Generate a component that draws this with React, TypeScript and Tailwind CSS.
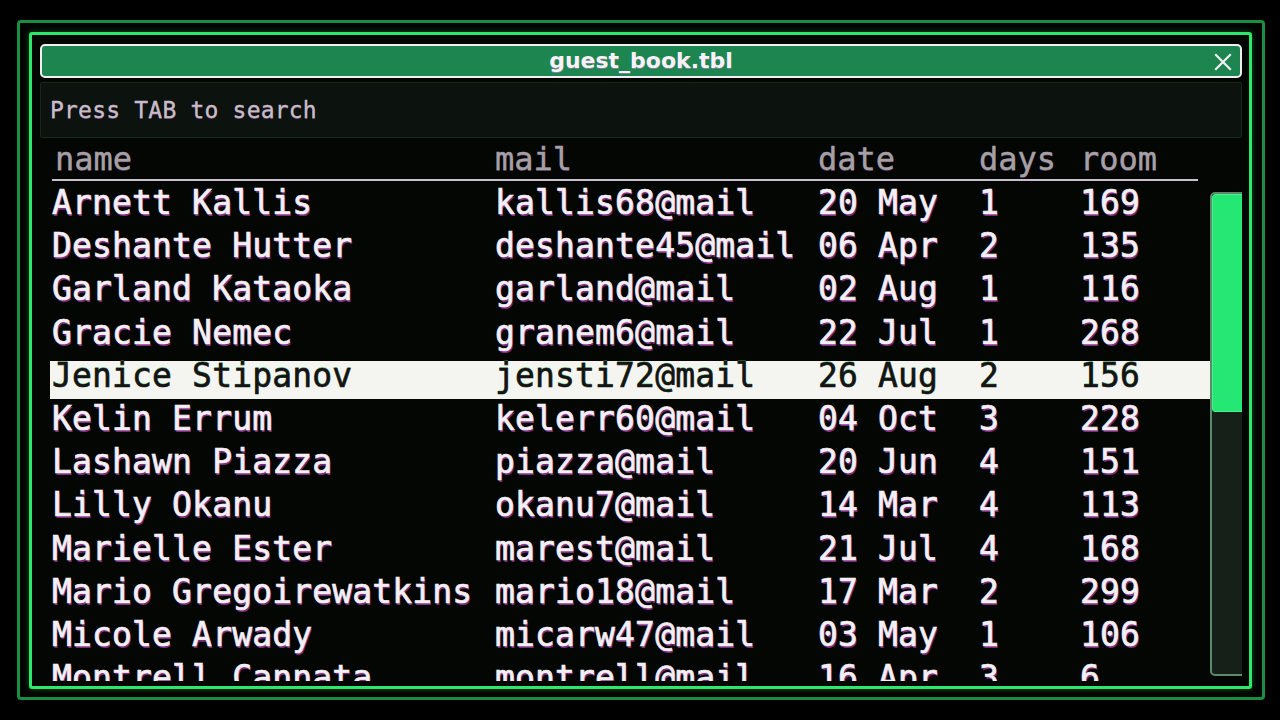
import React from "react";

type Guest = { name: string; mail: string; date: string; days: string; room: string };

const guests: Guest[] = [
  { name: "Arnett Kallis", mail: "kallis68@mail", date: "20 May", days: "1", room: "169" },
  { name: "Deshante Hutter", mail: "deshante45@mail", date: "06 Apr", days: "2", room: "135" },
  { name: "Garland Kataoka", mail: "garland@mail", date: "02 Aug", days: "1", room: "116" },
  { name: "Gracie Nemec", mail: "granem6@mail", date: "22 Jul", days: "1", room: "268" },
  { name: "Jenice Stipanov", mail: "jensti72@mail", date: "26 Aug", days: "2", room: "156" },
  { name: "Kelin Errum", mail: "kelerr60@mail", date: "04 Oct", days: "3", room: "228" },
  { name: "Lashawn Piazza", mail: "piazza@mail", date: "20 Jun", days: "4", room: "151" },
  { name: "Lilly Okanu", mail: "okanu7@mail", date: "14 Mar", days: "4", room: "113" },
  { name: "Marielle Ester", mail: "marest@mail", date: "21 Jul", days: "4", room: "168" },
  { name: "Mario Gregoirewatkins", mail: "mario18@mail", date: "17 Mar", days: "2", room: "299" },
  { name: "Micole Arwady", mail: "micarw47@mail", date: "03 May", days: "1", room: "106" },
  { name: "Montrell Cannata", mail: "montrell@mail", date: "16 Apr", days: "3", room: "6" },
];

const SELECTED = 4;

export default function App() {
  return (
    <div className="w-[1280px] h-[720px] bg-black pt-[20px] pl-[17px] overflow-hidden font-['DejaVu_Sans_Mono',monospace]">
      <div className="w-[1248px] h-[680px] border-[3px] border-[#1a8f43] rounded-[4px] pt-[9px] pl-[9px] pr-[10px] pb-[8px] bg-[#020402]">
        <div className="h-full border-[3px] border-[#2ce86d] rounded-[3px] bg-[#040604] flex flex-col pl-[8px] pr-[7px] pt-[9px] overflow-hidden shadow-[0_0_6px_rgba(40,230,100,0.35)]">
          {/* Title bar */}
          <div className="relative h-[34px] shrink-0 border-2 border-[#f4eef4] rounded-[5px] bg-[#1d8650] flex items-center justify-center">
            <span className="font-['DejaVu_Sans',sans-serif] font-bold text-[22px] leading-none text-[#f6f2f6] [text-shadow:0_1px_0_rgba(220,120,230,0.55)]">
              guest_book.tbl
            </span>
            <svg
              className="absolute right-[8px] top-[7px]"
              width="18"
              height="18"
              viewBox="0 0 18 18"
              fill="none"
              stroke="#f2eef2"
              strokeWidth="2.2"
              strokeLinecap="square"
            >
              <path d="M2 2 L16 16 M16 2 L2 16" />
            </svg>
          </div>

          {/* Search */}
          <div className="mt-[4px] h-[56px] shrink-0 bg-[#0c120d] border border-[#132a17] rounded-[2px] flex items-center pl-[9px]">
            <span className="text-[23px] tracking-[0.2px] text-[#c6bec6] [-webkit-text-stroke:0.3px_#c6bec6] [text-shadow:0_1px_0_rgba(200,90,210,0.45)]">
              Press TAB to search
            </span>
          </div>

          {/* Table + scrollbar */}
          <div className="mt-[2px] mb-[5px] flex-1 min-h-0 flex overflow-hidden pl-[10px]">
            <div className="w-[1162px] shrink-0 flex flex-col">
              <div className="h-[41px] shrink-0 ml-[2px] w-[1146px] border-b-2 border-[#c8bece] grid grid-cols-[443px_323px_161px_101px_1fr] text-[32px] leading-[38px] text-[#a4a0a4] [-webkit-text-stroke:0.4px_#a4a0a4] [text-shadow:0_1px_0_rgba(190,90,200,0.4)]">
                <span className="pl-[3px]">name</span>
                <span>mail</span>
                <span>date</span>
                <span>days</span>
                <span>room</span>
              </div>
              <div className="pt-[0.5px]">
                {guests.map((g, i) => {
                  const sel = i === SELECTED;
                  return (
                    <div key={g.name} className="h-[43.2px] pt-[6.6px]">
                      <div
                        className={
                          sel
                            ? "h-[38px] grid grid-cols-[445px_323px_161px_101px_1fr] content-start text-[33px] leading-[30px] tracking-[0.15px] bg-[#f4f4f1] text-[#141414] [-webkit-text-stroke:0.6px_#141414] [text-shadow:0_-1px_0_rgba(60,200,90,0.55)] whitespace-pre"
                            : "h-[38px] grid grid-cols-[445px_323px_161px_101px_1fr] content-start text-[33px] leading-[30px] tracking-[0.15px] text-[#f3eff3] [-webkit-text-stroke:0.7px_#f3eff3] [text-shadow:1px_2px_0_rgba(205,70,210,0.6)] whitespace-pre"
                        }
                      >
                        <span className="pl-[2px]">{g.name}</span>
                        <span>{g.mail}</span>
                        <span>{g.date}</span>
                        <span>{g.days}</span>
                        <span>{g.room}</span>
                      </div>
                    </div>
                  );
                })}
              </div>
            </div>

            {/* Scrollbar */}
            <div className="mt-[52px] ml-[-2px] w-[37px] h-[484px] shrink-0 border-2 border-[#5d8a6b] rounded-[5px] bg-[#161f18] overflow-hidden">
              <div className="h-[218px] bg-[#24e873] rounded-[3px] border border-[#4cf08e]" />
            </div>
          </div>
        </div>
      </div>
    </div>
  );
}
